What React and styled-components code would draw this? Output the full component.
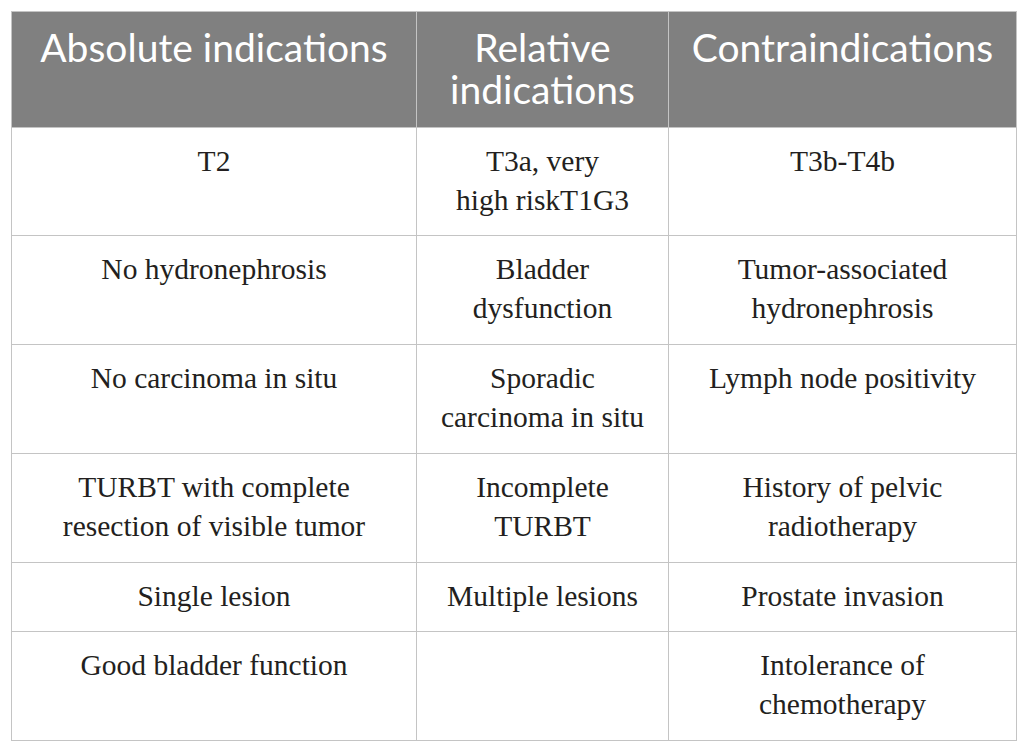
import React from "react";
import styled, { createGlobalStyle } from "styled-components";

const GlobalStyle = createGlobalStyle`
  html, body {
    margin: 0;
    padding: 0;
    background: #ffffff;
  }
`;

const Page = styled.div`
  padding: 11px 0 0 11px;
`;

const Table = styled.table`
  border-collapse: collapse;
  width: 1005px;
  table-layout: fixed;
  border: 1.5px solid #c4c4c4;
`;

const HeadCell = styled.th`
  width: ${(p) => p.$w}px;
  background: #808080;
  color: #ffffff;
  font-family: Lato, "Open Sans", sans-serif;
  font-weight: 400;
  font-size: 39px;
  line-height: 42px;
  height: 116px;
  box-sizing: border-box;
  padding: 14px 8px 16px;
  vertical-align: top;
  text-align: center;
  border-left: 1.5px solid #c4c4c4;
  border-right: 1.5px solid #c4c4c4;
`;

const Row = styled.tr`
  height: ${(p) => p.$h}px;
`;

const Cell = styled.td`
  font-family: "Liberation Serif", "Times New Roman", serif;
  font-size: 29.5px;
  line-height: 39px;
  color: #231f20;
  text-align: center;
  vertical-align: top;
  white-space: pre-line;
  padding: 14px 18px 15px;
  border: 1.5px solid #c4c4c4;
`;

const columns = [
  { label: "Absolute indications", w: 405 },
  { label: "Relative indications", w: 252 },
  { label: "Contraindications", w: 348 },
];

const rows = [
  { h: 108, cells: ["T2", "T3a, very\nhigh riskT1G3", "T3b-T4b"] },
  { h: 109, cells: ["No hydronephrosis", "Bladder\ndysfunction", "Tumor-associated\nhydronephrosis"] },
  { h: 109, cells: ["No carcinoma in situ", "Sporadic\ncarcinoma in situ", "Lymph node positivity"] },
  { h: 109, cells: ["TURBT with complete\nresection of visible tumor", "Incomplete\nTURBT", "History of pelvic\nradiotherapy"] },
  { h: 69, cells: ["Single lesion", "Multiple lesions", "Prostate invasion"] },
  { h: 109, cells: ["Good bladder function", "", "Intolerance of\nchemotherapy"] },
];

export default function App() {
  return (
    <Page>
      <GlobalStyle />
      <Table>
        <thead>
          <tr>
            {columns.map((c) => (
              <HeadCell key={c.label} $w={c.w}>
                {c.label}
              </HeadCell>
            ))}
          </tr>
        </thead>
        <tbody>
          {rows.map((r, i) => (
            <Row key={i} $h={r.h}>
              {r.cells.map((t, j) => (
                <Cell key={j}>{t}</Cell>
              ))}
            </Row>
          ))}
        </tbody>
      </Table>
    </Page>
  );
}
